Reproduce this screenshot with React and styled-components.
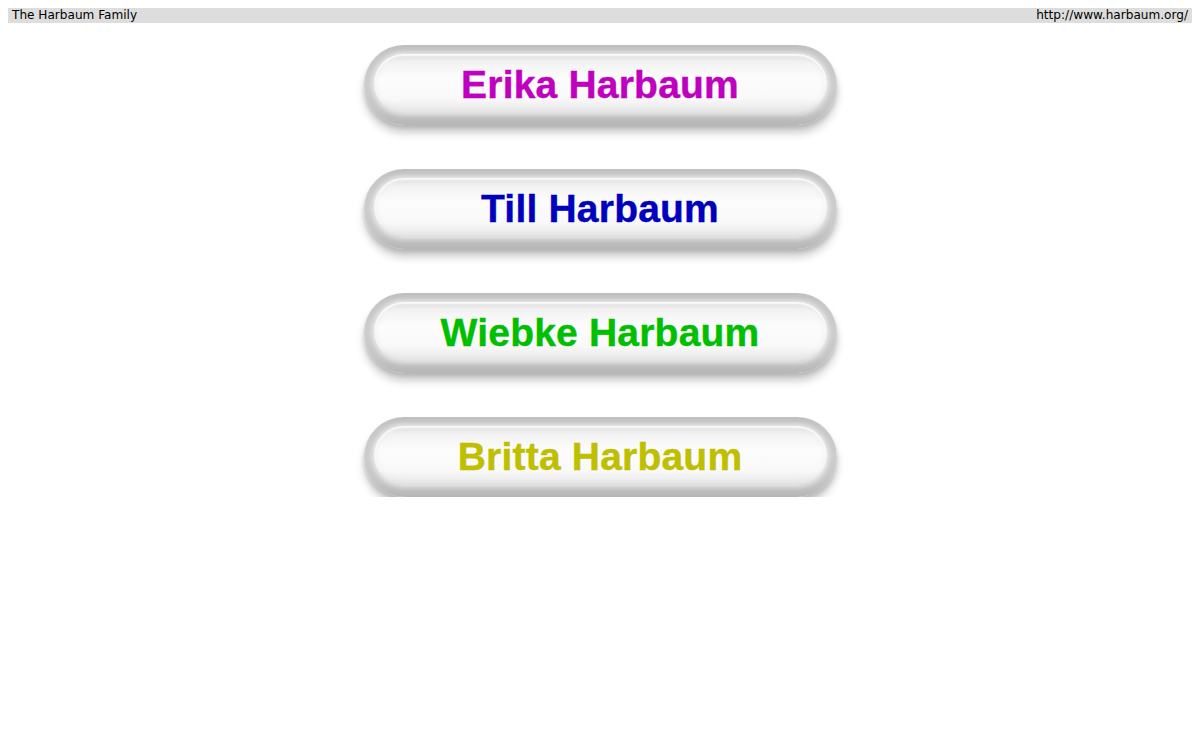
import React from "react";
import styled, { createGlobalStyle } from "styled-components";

const Global = createGlobalStyle`
  body {
    margin: 8px;
    background: #ffffff;
    font-family: "DejaVu Sans", Verdana, sans-serif;
  }
`;

const TopBar = styled.div`
  display: flex;
  justify-content: space-between;
  align-items: center;
  height: 15px;
  background: #dddddd;
  padding: 0 4px;
  font-family: "DejaVu Sans", Verdana, sans-serif;
  font-size: 12.1px;
  color: #000;
  line-height: 15px;
`;

const List = styled.div`
  display: flex;
  flex-direction: column;
  align-items: center;
  gap: 44px;
  padding-top: 22px;
`;

const Pill = styled.a`
  display: block;
  width: 473px;
  height: 80px;
  border-radius: 40px;
  box-sizing: border-box;
  padding: 9px 10px 12px 10px;
  background: linear-gradient(
    to bottom,
    #bfbfbf 0%,
    #c6c6c6 12%,
    #cdcdcd 50%,
    #c6c6c6 80%,
    #b6b6b6 100%
  );
  box-shadow: 0 8px 8px rgba(0, 0, 0, 0.2), 0 3px 4px rgba(0, 0, 0, 0.12);
  text-decoration: none;
`;

const Inner = styled.div`
  height: 100%;
  border-radius: 30px;
  display: flex;
  align-items: center;
  justify-content: center;
  background: linear-gradient(
    to bottom,
    #e2e2e2 0%,
    #f3f3f3 15%,
    #fcfcfc 40%,
    #f9f9f9 75%,
    #e6e6e6 100%
  );
  box-shadow: 0 0 5px 2px rgba(255, 255, 255, 0.65),
    inset 0 2px 2px rgba(255, 255, 255, 0.9),
    inset 0 0 8px rgba(0, 0, 0, 0.06);
`;

const Name = styled.span`
  font-family: "Liberation Sans", Arial, sans-serif;
  font-weight: bold;
  font-size: 39px;
  letter-spacing: 0.2px;
  -webkit-text-stroke: 0.4px ${(p) => p.$color};
  color: ${(p) => p.$color};
  margin-top: 2px;
`;

const people = [
  { name: "Erika Harbaum", color: "#bf00bf" },
  { name: "Till Harbaum", color: "#0000bf" },
  { name: "Wiebke Harbaum", color: "#00bf00" },
  { name: "Britta Harbaum", color: "#bfbf00" },
];

export default function App() {
  return (
    <>
      <Global />
      <TopBar>
        <span>The Harbaum Family</span>
        <span>http://www.harbaum.org/</span>
      </TopBar>
      <List>
        {people.map((p) => (
          <Pill key={p.name} href="#">
            <Inner>
              <Name $color={p.color}>{p.name}</Name>
            </Inner>
          </Pill>
        ))}
      </List>
    </>
  );
}
